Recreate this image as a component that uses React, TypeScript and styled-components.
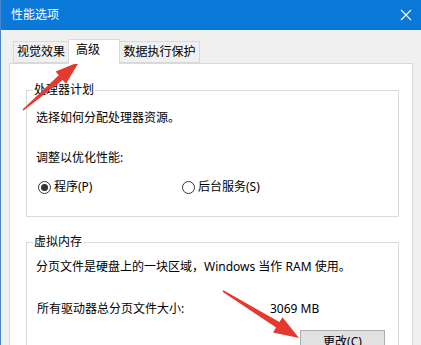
import styled, { createGlobalStyle } from "styled-components";

const GlobalStyle = createGlobalStyle`
  html, body {
    margin: 0;
    padding: 0;
    width: 421px;
    height: 345px;
    overflow: hidden;
    background: #f0f0f0;
  }
  body {
    font-family: "Segoe UI", "Noto Sans", "Noto Sans CJK SC", sans-serif;
    font-size: 12px;
    color: #000;
  }
`;

const Window = styled.div`
  position: relative;
  width: 421px;
  height: 345px;
  box-sizing: border-box;
  border-left: 1px solid #4a86cc;
  background: #f0f0f0;
  overflow: hidden;
  display: flex;
  flex-direction: column;
`;

const TitleBar = styled.div`
  height: 30px;
  flex-shrink: 0;
  background: #0a78d7;
  color: #fff;
  display: flex;
  align-items: center;
  justify-content: space-between;
  padding: 0 8px 0 10px;
  box-sizing: border-box;
  font-size: 12px;
  line-height: 16px;
`;

const CloseButton = styled.div`
  width: 12px;
  height: 12px;
  display: flex;
  margin-right: 1px;
  margin-top: -1px;
`;

const Body = styled.div`
  padding: 9px 8px 0 8px;
  flex: 1;
  display: flex;
  flex-direction: column;
`;

const TabRow = styled.div`
  display: flex;
  align-items: flex-end;
  height: 24px;
  margin-left: 4px;
`;

const Tab = styled.div<{ $width: number; $active?: boolean }>`
  width: ${(p) => p.$width}px;
  box-sizing: border-box;
  height: ${(p) => (p.$active ? 25 : 22)}px;
  margin-bottom: ${(p) => (p.$active ? -1 : 0)}px;
  position: relative;
  z-index: ${(p) => (p.$active ? 1 : 0)};
  border: 1px solid #d9d9d9;
  border-bottom: ${(p) => (p.$active ? "none" : "1px solid #d9d9d9")};
  border-left: ${(p) => (p.$active ? "1px solid #d9d9d9" : "1px solid #d9d9d9")};
  background: ${(p) => (p.$active ? "#fff" : "#f0f0f0")};
  display: flex;
  align-items: center;
  justify-content: ${(p) => (p.$active ? "flex-start" : "center")};
  padding-left: ${(p) => (p.$active ? 7 : 0)}px;
  padding-bottom: ${(p) => (p.$active ? 5 : 0)}px;
  font-size: 12px;
  line-height: 16px;
  & + & {
    border-left: ${(p) => (p.$active ? "1px solid #d9d9d9" : "none")};
  }
`;

const Panel = styled.div`
  flex: 1;
  background: #fff;
  border: 1px solid #d9d9d9;
  padding: 18px 13px 0 16px;
`;

const GroupBox = styled.fieldset<{ $gap?: number }>`
  margin: ${(p) => p.$gap ?? 0}px 0 0 0;
  border: 1px solid #dcdcdc;
  padding: 0 0 21px 9px;
  min-width: 0;
`;

const Legend = styled.legend`
  margin-left: -3px;
  padding: 0 1px;
  font-size: 12px;
  line-height: 16px;
`;

const Line = styled.div<{ $top: number }>`
  margin-top: ${(p) => p.$top}px;
  font-size: 12px;
  line-height: 16px;
  white-space: nowrap;
`;

const RadioRow = styled.div`
  display: grid;
  grid-template-columns: 144px auto;
  margin-top: 13px;
  margin-left: 2px;
`;

const RadioOption = styled.label`
  display: flex;
  align-items: center;
  gap: 3px;
  font-size: 12px;
  line-height: 16px;
`;

const RadioCircle = styled.span<{ $checked?: boolean }>`
  width: 13px;
  height: 13px;
  box-sizing: border-box;
  border-radius: 50%;
  border: 1px solid #333;
  background: #fff;
  display: flex;
  align-items: center;
  justify-content: center;
  &::after {
    content: "";
    width: 7px;
    height: 7px;
    border-radius: 50%;
    background: ${(p) => (p.$checked ? "#333" : "transparent")};
  }
`;

const SizeRow = styled.div`
  display: grid;
  grid-template-columns: 233px auto;
  margin-top: 26px;
  margin-left: 1px;
  font-size: 12px;
  line-height: 16px;
`;

const Button = styled.div`
  margin: 13px 0 0 264px;
  width: 85px;
  height: 23px;
  box-sizing: border-box;
  background: #e1e1e1;
  border: 1px solid #adadad;
  display: flex;
  align-items: center;
  justify-content: center;
  font-size: 12px;
  line-height: 16px;
`;

const Overlay = styled.svg`
  position: absolute;
  left: 0;
  top: 0;
  pointer-events: none;
`;

const arrowPoints = (
  x1: number,
  y1: number,
  x2: number,
  y2: number,
  headLen: number,
  headHalf: number,
  tailHalf: number,
  neckHalf: number
) => {
  const len = Math.hypot(x2 - x1, y2 - y1);
  const ux = (x2 - x1) / len;
  const uy = (y2 - y1) / len;
  const nx = -uy;
  const ny = ux;
  const bx = x2 - ux * headLen;
  const by = y2 - uy * headLen;
  const pts = [
    [x1 + nx * tailHalf, y1 + ny * tailHalf],
    [bx + nx * neckHalf, by + ny * neckHalf],
    [bx + nx * headHalf, by + ny * headHalf],
    [x2, y2],
    [bx - nx * headHalf, by - ny * headHalf],
    [bx - nx * neckHalf, by - ny * neckHalf],
    [x1 - nx * tailHalf, y1 - ny * tailHalf],
  ];
  return pts.map((p) => p.map((v) => v.toFixed(1)).join(",")).join(" ");
};

const App = () => {
  return (
    <>
      <GlobalStyle />
      <Window>
        <TitleBar>
          <span>性能选项</span>
          <CloseButton>
            <svg width="12" height="12" viewBox="0 0 12 12">
              <path d="M1 1 L11 11 M11 1 L1 11" stroke="#fff" strokeWidth="1.1" />
            </svg>
          </CloseButton>
        </TitleBar>
        <Body>
          <TabRow>
            <Tab $width={56}>视觉效果</Tab>
            <Tab $width={51} $active>
              高级
            </Tab>
            <Tab $width={80}>数据执行保护</Tab>
          </TabRow>
          <Panel>
            <GroupBox>
              <Legend>处理器计划</Legend>
              <Line $top={12}>选择如何分配处理器资源。</Line>
              <Line $top={24}>调整以优化性能:</Line>
              <RadioRow>
                <RadioOption>
                  <RadioCircle $checked />
                  程序(P)
                </RadioOption>
                <RadioOption>
                  <RadioCircle />
                  后台服务(S)
                </RadioOption>
              </RadioRow>
            </GroupBox>
            <GroupBox $gap={17}>
              <Legend>虚拟内存</Legend>
              <Line $top={9}>分页文件是硬盘上的一块区域，Windows 当作 RAM 使用。</Line>
              <SizeRow>
                <span>所有驱动器总分页文件大小:</span>
                <span>3069 MB</span>
              </SizeRow>
              <Button>更改(C)</Button>
            </GroupBox>
          </Panel>
        </Body>
        <Overlay width="421" height="345" viewBox="0 0 421 345">
          <polygon points={arrowPoints(22, 110, 78, 62, 24, 8, 0.8, 3)} fill="#e5392f" />
          <polygon points={arrowPoints(222, 291, 298, 338, 25, 9, 0.8, 3.2)} fill="#e5392f" />
        </Overlay>
      </Window>
    </>
  );
};

export default App;
